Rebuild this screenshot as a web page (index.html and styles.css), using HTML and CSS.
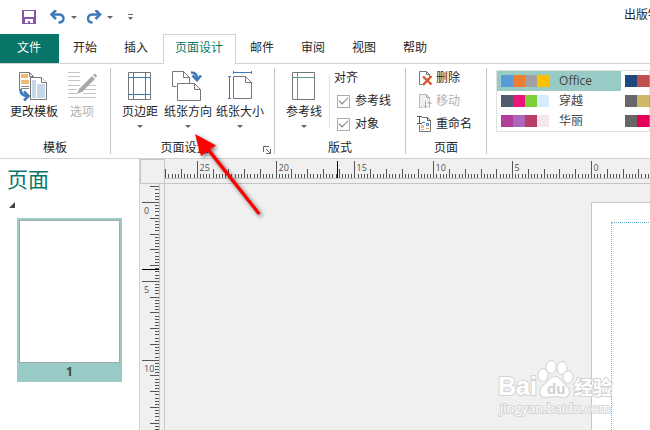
FILE: index.html
```html
<!DOCTYPE html>
<html lang="zh-CN">
<head>
<meta charset="utf-8">
<title>出版物</title>
<link rel="stylesheet" href="styles.css">
</head>
<body>
<header class="titlebar">
  <div class="quick">
    <button class="quick-btn" aria-label="保存"><svg width="14" height="14" viewBox="0 0 14 14"><path fill="#8656a8" d="M0 0h14v14H0z"/><path fill="#fff" d="M2 1h10v6H2zM3 9h8v4H8v-2H6v2H3z"/></svg></button>
    <button class="quick-btn undo" aria-label="撤销"><svg width="16" height="14" viewBox="0 0 16 14"><path d="M2 4.500h6.500q5 0 5 4t-5 4" fill="none" stroke="#417ab8" stroke-width="2.400"/><path d="M6 0 1.500 4.500 6 9" fill="none" stroke="#417ab8" stroke-width="2.600"/></svg><span class="caret"></span></button>
    <button class="quick-btn redo" aria-label="恢复"><svg width="16" height="14" viewBox="0 0 16 14"><path d="M13 4.500H7q-5 0-5 4t4.500 4" fill="none" stroke="#417ab8" stroke-width="2.400"/><path d="M9.500 0 14 4.500 9.500 9" fill="none" stroke="#417ab8" stroke-width="2.600"/></svg><span class="caret"></span></button>
    <button class="quick-btn more" aria-label="自定义快速访问工具栏"><svg width="5" height="6" viewBox="0 0 5 6"><path d="M0 0h5v1H0zM0 3h5L2.500 6z" fill="#666"/></svg></button>
  </div>
  <span class="doc-title">出版物</span>
</header>

<nav class="tabs">
  <button class="tab file">文件</button>
  <button class="tab">开始</button>
  <button class="tab">插入</button>
  <button class="tab active">页面设计</button>
  <button class="tab">邮件</button>
  <button class="tab">审阅</button>
  <button class="tab">视图</button>
  <button class="tab">帮助</button>
</nav>

<section class="ribbon">
  <div class="group">
    <div class="tools templates">
      <button class="tool">
        <svg class="icon" viewBox="0 0 30 30"><path d="M.5 19V1.500h10l4 4v15" fill="#fff" stroke="#777"/><path d="M2 3h7v4H2zM2 9h8v4H2z" fill="#eebb72"/><path d="M2 15.500h8M2 17.500h8" stroke="#888"/><path d="M10.500 1.500v4h4" fill="none" stroke="#777"/><path d="M11.500 6.500h11l5 5v17h-16z" fill="#fff" stroke="#777"/><path d="M13 9h4v18h-4zM18 13h8v14h-8z" fill="#c3d6ea"/><path d="M22.500 6.500v5h5" fill="#fff" stroke="#777"/><path d="M1.500 18q0 7 7 7" fill="none" stroke="#417ab8" stroke-width="2.600"/><path d="m5 20.500 4.500 4.500L5 29.500" fill="none" stroke="#417ab8" stroke-width="2.600"/></svg>
        <span>更改模板</span>
      </button>
      <button class="tool" disabled>
        <svg class="icon" viewBox="0 0 30 30"><path d="M1 1.500h12M1 5.500h12M1 9.500h12M1 14.500h12M1 18.500h9M19 14.500h10M16 18.500h13M1 22.500h9M16 22.500h13M1 26.500h28" stroke="#c5c5c5"/><path d="M12 18 25 5l3 3-13 13-5 2z" fill="#a9a7a9"/><path d="m26 4 1.500-1.500q1 0 2.500 2.500L29 7z" fill="#a9a7a9"/></svg>
        <span>选项</span>
      </button>
    </div>
    <h2>模板</h2>
  </div>

  <div class="group setup">
    <div class="tools">
      <button class="tool">
        <svg class="icon" viewBox="0 0 30 30"><path d="M3.500 1.500h22v27h-22z" fill="#fff" stroke="#777"/><path d="M8.500 2v26M20.500 2v26M4 6.500h21M4 23.500h21" stroke="#417ab8"/></svg>
        <span>页边距</span><span class="caret"></span>
      </button>
      <button class="tool">
        <svg class="icon" viewBox="0 0 30 30"><path d="M3.500 15.500h-4V.5h11l6 6v6" fill="#fff" stroke="#777"/><path d="M10.500.5v6h6" fill="none" stroke="#777"/><path d="M4.500 12.500h17l6 6v11h-23z" fill="#fff" stroke="#777"/><path d="M21.500 12.500v6h6" fill="none" stroke="#777"/><path d="M18 1.500q6 0 6 6" fill="none" stroke="#417ab8" stroke-width="2.600"/><path d="m19.500 4.500 4.500 4.500 4-4.500" fill="none" stroke="#417ab8" stroke-width="2.600"/></svg>
        <span>纸张方向</span><span class="caret"></span>
      </button>
      <button class="tool">
        <svg class="icon" viewBox="0 0 30 30"><path d="M8.500 5.500h12l6 6v16h-18z" fill="#fff" stroke="#777"/><path d="M20.500 5.500v6h6" fill="none" stroke="#777"/><path d="M8 1.500h18M8.500 0v3M26.500 0v3M4.500 6v21M3 5.500h3M3 27.500h3" stroke="#417ab8" fill="none"/></svg>
        <span>纸张大小</span><span class="caret"></span>
      </button>
    </div>
    <h2>页面设置</h2>
    <button class="launcher" aria-label="页面设置对话框"><svg width="8" height="8" viewBox="0 0 8 8"><path d="M.5 6V.5H6M7.500 3v4.500H3M3 3l4 4" fill="none" stroke="#666"/></svg></button>
  </div>

  <div class="group">
    <div class="tools layout">
      <button class="tool">
        <svg class="icon" viewBox="0 0 30 30"><path d="M3.500 1.500h22v27h-22z" fill="#fff" stroke="#777"/><path d="M8.500 2v26M4 6.500h21" stroke="#5e9d85"/></svg>
        <span>参考线</span><span class="caret"></span>
      </button>
      <div class="rows align">
        <span class="row">对齐</span>
        <label class="row check"><input type="checkbox" checked>参考线</label>
        <label class="row check"><input type="checkbox" checked>对象</label>
      </div>
    </div>
    <h2>版式</h2>
  </div>

  <div class="group">
    <div class="rows pages">
      <button class="row"><svg class="small-icon" viewBox="0 0 16 16"><path d="M5 14.500H2.500v-13h7l3 3v2" fill="#fff" stroke="#777"/><path d="M9.500 1.500v3h3" fill="none" stroke="#777"/><path d="m6 6.500 8.500 8M14.500 6 6 15" stroke="#d9532c" stroke-width="2.400"/></svg>删除</button>
      <button class="row" disabled><svg class="small-icon" viewBox="0 0 16 16"><path d="M6 14.500H2.500v-13h7l3 3v3" fill="#f3f0f5" stroke="#b8b8b8"/><path d="M9.500 1.500v3h3M8.500 8v7M6.500 12.500l2 2.500 2-2.500M12.500 15V8.500M10.500 11l2-2.500 2 2.500" fill="none" stroke="#aaa"/></svg>移动</button>
      <button class="row"><svg class="small-icon" viewBox="0 0 16 16"><path d="M5 1.500h5.500l3 3v11h-11v-6" fill="#fff" stroke="#777"/><path d="M10.500 1.500v3h3M0 .5h5M0 7.500h5M2.500.5v7" fill="none" stroke="#555"/><path d="M5 6.500h3M9.500 7.500h2v2h-2z" fill="none" stroke="#417ab8"/><path d="M4.500 9.500h2v2h-2zM4 13.500h3M9 12.500h3" fill="none" stroke="#e8ae50"/></svg>重命名</button>
    </div>
    <h2>页面</h2>
  </div>

  <div class="group schemes">
    <div class="gallery">
      <button class="scheme selected"><i class="c1"></i><i class="c2"></i><i class="c3"></i><i class="c4"></i><span>Office</span></button>
      <button class="scheme"><i class="c13"></i><i class="c14"></i><i class="c1"></i><i class="c3"></i></button>
      <button class="scheme"><i class="c5"></i><i class="c6"></i><i class="c7"></i><i class="c8"></i><span>穿越</span></button>
      <button class="scheme"><i class="c15"></i><i class="c16"></i><i class="c17"></i><i class="c3"></i></button>
      <button class="scheme"><i class="c9"></i><i class="c10"></i><i class="c11"></i><i class="c12"></i><span>华丽</span></button>
      <button class="scheme"><i class="c18"></i><i class="c19"></i><i class="c20"></i><i class="c3"></i></button>
    </div>
  </div>
</section>

<main class="workspace">
  <aside class="panel">
    <h1>页面</h1>
    <svg class="fold" width="6" height="6" viewBox="0 0 6 6"><path d="M6 0v6H0z" fill="#444"/></svg>
    <button class="thumb"><span class="sheet"></span><span class="number">1</span></button>
  </aside>
  <div class="stage">
    <div class="corner"></div>
    <div class="ruler horizontal"><svg class="scale" id="ruler-x"></svg></div>
    <div class="ruler vertical"><svg class="scale" id="ruler-y"></svg></div>
    <div class="canvas"><div class="paper"><div class="margins"></div></div></div>
  </div>
</main>

<svg class="pointer" width="90" height="100" viewBox="0 0 90 100" aria-hidden="true">
  <path class="pointer-shape" d="M5 4 26 15.500l-6 3.500L70.500 83l-2.500 2L17.500 21.500 11 26z"/>
</svg>

<svg class="watermark" width="120" height="60" viewBox="0 0 120 60">
  <g class="mark">
    <ellipse cx="45" cy="16" rx="4.500" ry="6"/><ellipse cx="53" cy="8" rx="4.500" ry="6"/><ellipse cx="64" cy="9" rx="4.500" ry="6"/><ellipse cx="70" cy="18" rx="4.500" ry="5.500"/>
    <path d="M57 18c5 0 7 6 11 9s5 11-3 11c-4 0-5-1-8-1s-5 1-9 1c-7 0-7-8-3-11s7-9 12-9z"/>
    <text class="brand" x="0" y="36">Bai</text>
    <text class="brand-cn" x="76" y="36">经验</text>
  </g>
  <text class="du" x="49" y="35">du</text>
  <text class="site" x="2" y="54">jingyan.baidu.com</text>
</svg>
<script src="rulers.js"></script>
</body>
</html>
```
FILE: styles.css
```css
* { box-sizing: border-box; }

body {
  margin: 0;
  height: 100vh;
  display: flex;
  flex-direction: column;
  overflow: hidden;
  background: #fff;
  color: #262626;
  font: 12px/16px "Open Sans", "Noto Sans CJK SC", sans-serif;
}

button {
  border: 0;
  padding: 0;
  margin: 0;
  background: none;
  color: inherit;
  font: inherit;
}

h1, h2 { margin: 0; font-weight: 400; }
svg { display: block; flex: none; }

.caret {
  width: 0;
  height: 0;
  border: 3px solid transparent;
  border-top-color: #666;
  border-bottom: 0;
}

/* Title bar */
.titlebar {
  flex: none;
  height: 34px;
  display: flex;
  justify-content: space-between;
  overflow: hidden;
}
.quick { display: flex; align-items: center; padding-left: 22px; }
.quick-btn { display: flex; align-items: center; gap: 5px; }
.undo { margin-left: 14px; }
.redo { margin-left: 9px; }
.more { margin-left: 15px; }
.doc-title { width: 26px; line-height: 30px; white-space: nowrap; }

/* Tabs */
.tabs {
  flex: none;
  height: 30px;
  display: flex;
  border-bottom: 1px solid #d2d2d2;
}
.tab { padding: 0 13px 2px 14px; white-space: nowrap; }
.file { padding: 0 18px 2px 17px; background: #077568; color: #fff; }
.active {
  margin: 0 0 -1px 2px;
  padding: 0 12px 4px 11px;
  border: 1px solid #d2d2d2;
  border-bottom: 0;
  background: #fff;
  color: #077568;
}

/* Ribbon */
.ribbon {
  flex: none;
  height: 95px;
  display: flex;
  padding: 4px 0;
  border-bottom: 1px solid #d2d2d2;
}
.group {
  position: relative;
  flex: none;
  display: flex;
  flex-direction: column;
  justify-content: space-between;
  border-right: 1px solid #c6c6c6;
}
.group h2 { font-size: 12px; line-height: 12px; text-align: center; }
.tools { display: flex; padding: 0 8px 0 7px; }
.templates { padding: 0 6px 0 8px; }
.layout { padding-right: 14px; }
.pages { padding: 0 14px 0 11px; }
.setup h2 { padding-right: 16px; }
.schemes { flex: 1; min-width: 0; padding-left: 9px; border: 0; overflow: hidden; }
.tool {
  display: flex;
  flex-direction: column;
  align-items: center;
  justify-content: flex-start;
  min-width: 44px;
  padding: 3px 2px 0;
  white-space: nowrap;
}
.icon { width: 30px; height: 30px; margin-bottom: 3px; overflow: visible; }
.tool .caret { margin-top: 5px; }
button:disabled { color: #b1b1b1; }
.launcher { position: absolute; right: 3px; bottom: 0; }

.rows { display: flex; flex-direction: column; gap: 3px; }
.row { display: flex; align-items: center; height: 20px; gap: 3px; white-space: nowrap; }
.align { position: relative; margin-left: 3px; padding-left: 5px; }
.align::before {
  content: "";
  position: absolute;
  left: 0;
  top: 7px;
  bottom: 6px;
  border-left: 1px solid #e1e1e1;
}
.check { gap: 5px; padding-left: 3px; }
.check input {
  appearance: none;
  width: 13px;
  height: 13px;
  margin: 0;
  border: 1px solid #ababab;
  display: grid;
  place-items: center;
}
.check input:checked::before {
  content: "";
  width: 8px;
  height: 4px;
  margin-bottom: 3px;
  border: solid #777;
  border-width: 0 0 1px 1px;
  transform: rotate(-45deg);
}
.small-icon { width: 16px; height: 16px; }

.gallery {
  display: grid;
  grid-template-columns: 124px 124px;
  margin-top: 2px;
  border: 1px solid #e1e1e1;
}
.scheme { display: flex; align-items: center; height: 20px; padding-left: 4px; }
.scheme span { margin-left: 10px; color: #444; }
.scheme i { width: 12px; height: 12px; }
.selected { background: #98cbc5; }
.c1 { background: #5b9bd5; }
.c2 { background: #ed7d31; }
.c3 { background: #a0a0a0; }
.c4 { background: #ffc000; }
.c5 { background: #4e5b6f; }
.c6 { background: #ea157a; }
.c7 { background: #7fd13b; }
.c8 { background: #d6ecff; }
.c9 { background: #b13f9a; }
.c10 { background: #ac66bb; }
.c11 { background: #b83d68; }
.c12 { background: #f4e7ed; }
.c13 { background: #1f497d; }
.c14 { background: #c0504d; }
.c15 { background: #69676d; }
.c16 { background: #ceb966; }
.c17 { background: #9cb084; }
.c18 { background: #666; }
.c19 { background: #e40059; }
.c20 { background: #ff388c; }

/* Page panel */
.workspace { flex: 1; min-height: 0; display: flex; }
.panel { flex: none; width: 139px; }
.panel h1 { padding: 4px 7px 0; color: #077568; font-size: 21px; line-height: 32px; }
.fold { margin: 7px 0 0 9px; }
.thumb {
  display: flex;
  flex-direction: column;
  width: 105px;
  margin: 10px 0 0 17px;
  padding: 2px;
  background: #98cbc5;
}
.sheet { width: 101px; height: 143px; border: 1px solid #a6a6a6; background: #fff; }
.number { align-self: center; line-height: 17px; font-weight: 700; color: #444; }

/* Rulers and canvas */
.stage {
  flex: 1;
  min-width: 0;
  display: grid;
  grid-template: 25px 1fr / 25px 1fr;
  border-left: 1px solid #d2d2d2;
  background: #f0f0f0;
  overflow: hidden;
}
.corner { border: 1px solid #c6c6c6; }
.ruler { min-width: 0; min-height: 0; overflow: hidden; }
.horizontal { border-bottom: 1px solid #c6c6c6; }
.vertical { border-right: 1px solid #c6c6c6; }
.horizontal .scale { width: 100%; height: 20px; border-bottom: 1px solid #c6c6c6; }
.vertical .scale { width: 20px; height: 100%; border-right: 1px solid #c6c6c6; }
.scale { stroke: #555; }
.scale .cursor { stroke: #000; }
.scale text { stroke: none; fill: #555; font-size: 9px; }
.canvas { min-width: 0; min-height: 0; padding: 18px 0 0 426px; overflow: hidden; }
.paper {
  width: 660px;
  height: 940px;
  padding: 19px;
  border: 1px solid #c6c6c6;
  background: #fff;
}
.margins { height: 100%; border: 1px dotted #5fb8e0; }

/* Overlays */
.pointer { position: absolute; left: 190px; top: 130px; filter: drop-shadow(2px 2px 2px #0008); }
.pointer-shape { fill: #f00; }
.watermark { position: absolute; left: 498px; top: 359px; overflow: visible; }
.mark { fill: #fff; stroke: #d4d4d4; stroke-width: 2px; paint-order: stroke; }
.brand { font: 700 25px "Liberation Sans", sans-serif; }
.brand-cn { font: 700 19px "Noto Sans CJK SC", sans-serif; }
.du { fill: #d0d0d0; font: 700 15px "Liberation Sans", sans-serif; }
.site { font: 13px "Open Sans", sans-serif; fill: #fff; stroke: #d4d4d4; stroke-width: 2px; paint-order: stroke; }
```
FILE: rulers.js
```js
const NS = "http://www.w3.org/2000/svg";
const CM = 15.77;

function line(svg, cls, x1, y1, x2, y2) {
  const el = document.createElementNS(NS, "line");
  Object.entries({ class: cls, x1, y1, x2, y2 }).forEach(([k, v]) => el.setAttribute(k, v));
  svg.append(el);
}

function label(svg, x, y, value) {
  const el = document.createElementNS(NS, "text");
  el.setAttribute("x", x);
  el.setAttribute("y", y);
  el.textContent = value;
  svg.append(el);
}

function drawRuler(svg, zero, horizontal, cursor) {
  const box = svg.getBoundingClientRect();
  const length = horizontal ? box.width : box.height;
  const step = CM / 5;
  const first = Math.ceil(-zero / step);
  const last = Math.floor((length - zero) / step);
  for (let i = first; i <= last; i++) {
    const p = Math.round(zero + i * step) + 0.5;
    const major = i % 25 === 0;
    const start = major ? 2 : i % 5 === 0 ? 10 : 15;
    if (horizontal) line(svg, "tick", p, start, p, 19);
    else line(svg, "tick", start, p, 19, p);
    if (major) {
      const value = Math.abs(i / 5);
      if (horizontal) label(svg, p + 2, 12, value);
      else label(svg, 4, p + 11, value);
    }
  }
  if (horizontal) line(svg, "cursor", cursor, 2, cursor, 20);
  else line(svg, "cursor", 2, cursor, 20, cursor);
}

drawRuler(document.getElementById("ruler-x"), 426, true, 172.5);
drawRuler(document.getElementById("ruler-y"), 18, false, 85.5);
```
